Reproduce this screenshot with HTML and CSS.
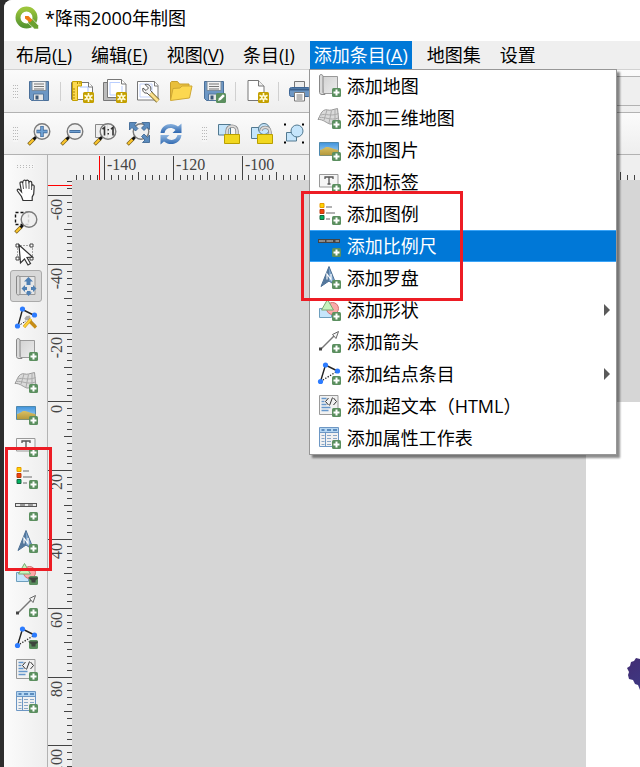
FILE: index.html
```html
<!DOCTYPE html>
<html lang="zh-CN">
<head>
    <meta charset="UTF-8">
    <meta name="viewport" content="width=device-width, initial-scale=1.0">
    <title>*降雨2000年制图</title>
    <link rel="stylesheet" href="styles.css">
</head>
<body>
    <svg class="sprite" aria-hidden="true">
        <defs>
            <linearGradient id="g-sky" x1="0" y1="0" x2="0" y2="1">
                <stop offset="0" stop-color="#3f93dd"/><stop offset="1" stop-color="#b5dcf5"/>
            </linearGradient>
            <linearGradient id="g-sand" x1="0" y1="0" x2="0" y2="1">
                <stop offset="0" stop-color="#d9c063"/><stop offset="1" stop-color="#b3973a"/>
            </linearGradient>
            <linearGradient id="g-paper" x1="0" y1="0" x2="1" y2="1">
                <stop offset="0" stop-color="#d2d2d2"/><stop offset="1" stop-color="#ececec"/>
            </linearGradient>
            <linearGradient id="g-logo" x1="0" y1="0" x2="0" y2="1">
                <stop offset="0" stop-color="#9cc53b"/><stop offset="1" stop-color="#589632"/>
            </linearGradient>
            <linearGradient id="g-sync" x1="0" y1="0" x2="0" y2="1">
                <stop offset="0" stop-color="#8fb6e0"/><stop offset="1" stop-color="#2f68b0"/>
            </linearGradient>
            <linearGradient id="g-rain" x1="0" y1="0" x2="1" y2="1">
                <stop offset="0" stop-color="#432c72"/><stop offset="1" stop-color="#3b3f8c"/>
            </linearGradient>
        </defs>

        <!-- badges -->
        <symbol id="plus" viewBox="0 0 24 24">
            <rect x="15" y="14" width="9" height="9" rx="1.500" fill="#5b8f5f"/>
            <path d="M19.500 15.500v6M16.500 18.500h6" stroke="#fff" stroke-width="2"/>
        </symbol>
        <symbol id="plus-menu" viewBox="0 0 24 24">
            <rect x="15" y="14" width="9" height="9" rx="1.500" fill="#5b8f5f"/>
            <path d="M14 15.500h11l-3.500 3v2h-4v-2z" fill="#3d443d"/>
        </symbol>
        <symbol id="gold" viewBox="0 0 24 24">
            <rect x="13" y="13" width="11" height="11" rx="1.500" fill="#c4a000"/>
            <path d="M18.500 14v9M14.500 16.200l8 4.600M14.500 20.800l8-4.600" stroke="#fffbd8" stroke-width="1.600"/>
            <circle cx="18.500" cy="18.500" r="2.500" fill="#fffbd8"/>
            <circle cx="18.500" cy="18.500" r=".9" fill="#c4a000"/>
        </symbol>
        <symbol id="lens" viewBox="0 0 24 24">
            <path d="M1.500 22.500L7.500 16.500" stroke="#7a6420" stroke-width="3.600"/>
            <path d="M2 22L7 17" stroke="#fcc52c" stroke-width="2.200"/>
            <path d="M6.500 17.500L9.500 14.500" stroke="#111" stroke-width="2.600"/>
            <circle cx="15" cy="9.500" r="7.800" fill="#efefef" fill-opacity=".85" stroke="#7b7b7b" stroke-width="1.400"/>
        </symbol>

        <!-- file toolbar -->
        <symbol id="save" viewBox="0 0 24 24">
            <path d="M2.500 2.500h19v19h-17l-2-2z" fill="#6d97c4" stroke="#4a6f99"/>
            <path d="M5 2.500h14v9H5z" fill="#f2f2f2" stroke="#7d8c9b"/>
            <path d="M7 5h10M7 7.500h10M7 10h10" stroke="#777"/>
            <path d="M6.500 15h10v6.500h-10z" fill="#e6e6e6" stroke="#53769e"/>
            <path d="M8.500 16.500h3v4h-3z" fill="#3d5876"/>
        </symbol>
        <symbol id="new-layout" viewBox="0 0 24 24">
            <path d="M1.500 3.500h17l4 4v13h-21z" fill="#fff" stroke="#777"/>
            <path d="M10 8h8v8" fill="none" stroke="#aac4ff"/>
            <path d="M2.500 2.500h9v4.500h-4v14.500h-5z" fill="#fcd94f" stroke="#c4a000"/>
            <path d="M3 10h2M3 13h2M3 16h2M3 19h2M7.500 3v2M10 3v2" stroke="#a98600"/>
            <path d="M18.500 3v5h4" fill="#fff" stroke="#777"/>
            <use href="#gold"/>
        </symbol>
        <symbol id="duplicate" viewBox="0 0 24 24">
            <path d="M.5 3.500h18v18h-18z" fill="#bcbcbc" stroke="#777"/>
            <path d="M4.500 .5h14l4.500 4.500v13.500H4.500z" fill="#fff" stroke="#777"/>
            <path d="M7 3.500h10M7 3v13h12V7" fill="none" stroke="#b9ceff"/>
            <path d="M18.500 .5V5H23" fill="#fff" stroke="#777"/>
            <use href="#gold"/>
        </symbol>
        <symbol id="manager" viewBox="0 0 24 24">
            <path d="M1.500 2.500h17l3.500 4v14.500H1.500z" fill="#fff" stroke="#777"/>
            <path d="M4 5h12v13H4z" fill="none" stroke="#c3d3fb"/>
            <path d="M18.500 2.500V7H22" fill="#fff" stroke="#777"/>
            <path d="M9 5.500c4-1 7 2.500 5.500 6l2 2-3 3-2.500-2.500c-3 .7-5-2-4-5l3 2.500 2.500-2.500z" fill="#f4f4f4" stroke="#555"/>
            <path d="M14.500 14.500l7.500 7.500" stroke="#8b7a3a" stroke-width="4.600"/>
            <path d="M14.500 14.500l7.500 7.500" stroke="#fbe08a" stroke-width="2.800"/>
        </symbol>
        <symbol id="open" viewBox="0 0 24 24">
            <path d="M1.500 21V3.500l1-1h6l2 2.500h9.500v4" fill="#e9bf3c" stroke="#c79f2e"/>
            <path d="M1.500 21.500L4 9.500l7-.5 2-2h10L20.500 19z" fill="#fcd850" stroke="#cfa835"/>
        </symbol>
        <symbol id="save-as" viewBox="0 0 24 24">
            <use href="#save"/>
            <rect x="14" y="14" width="10" height="10" rx="1.500" fill="#5b8f5f"/>
            <path d="M16 22l1-2.800 4-4 1.800 1.800-4 4z" fill="#fff"/>
        </symbol>
        <symbol id="add-page" viewBox="0 0 24 24">
            <path d="M3 1.500h10.500l5.500 5.500v14.500H3z" fill="#fff" stroke="#777"/>
            <path d="M13.500 1.500V7H19" fill="#eee" stroke="#777"/>
            <use href="#gold"/>
        </symbol>
        <symbol id="print" viewBox="0 0 24 24">
            <path d="M6.500 2.500h10v7h-10z" fill="#ededed" stroke="#777"/>
            <rect x="1.500" y="8.500" width="21" height="9" rx="2" fill="#6d97c4" stroke="#3f6796"/>
            <path d="M2 10.500h20" stroke="#3b5f8b" stroke-width="2"/>
            <path d="M6.500 13.500h10v8.500h-10z" fill="#fff" stroke="#777"/>
            <path d="M8.500 16h6M8.500 18h6M8.500 20h6" stroke="#777"/>
        </symbol>

        <!-- view toolbar -->
        <symbol id="zoom-in" viewBox="0 0 24 24">
            <use href="#lens"/>
            <path d="M15 4v11M9.500 9.500h11" stroke="#38608f" stroke-width="3.400"/>
            <path d="M15 4.500v10M10 9.500h10" stroke="#6d9fd2" stroke-width="2"/>
        </symbol>
        <symbol id="zoom-out" viewBox="0 0 24 24">
            <use href="#lens"/>
            <path d="M9.500 9.500h11" stroke="#38608f" stroke-width="3"/>
            <path d="M10 9.500h10" stroke="#6d9fd2" stroke-width="1.600"/>
        </symbol>
        <symbol id="zoom-actual" viewBox="0 0 24 24">
            <path d="M2.500 2.500h12v13h-12z" fill="#eee" stroke="#888"/>
            <use href="#lens"/>
            <path d="M9.500 7.200l2-1.700v8M18 7.200l2-1.700v8" fill="none" stroke="#333" stroke-width="1.600"/>
            <path d="M14.500 7h1.500v1.500h-1.500zM14.500 11h1.500v1.500h-1.500z" fill="#333"/>
        </symbol>
        <symbol id="zoom-full" viewBox="0 0 24 24">
            <use href="#lens"/>
            <g fill="#5b8bbd" stroke="#355f8e" stroke-width=".8">
                <path d="M3.500 .5h7L8.500 3 12 6.500 9.500 9 6 5.500 3.500 8z"/>
                <path d="M23.500 .5v7L21 5.500 18 8.500 15.500 6l3-3-2.500-2.500z"/>
                <path d="M23.500 20.500h-7l2.500-2.500-3.500-3.500L18 12l3.500 3.500 2-2.500z"/>
            </g>
        </symbol>
        <symbol id="refresh" viewBox="0 0 24 24">
            <path d="M1.500 11C2.500 2 13-.5 19 4.500L22.500 1.500V11h-9l3-3C12 4.500 6.500 6 5.500 11z" fill="url(#g-sync)"/>
            <path d="M22.500 13c-1 9-11.500 11.500-17.500 6.500L1.500 22.500V13h9l-3 3c4.500 3.500 10 2 11-3z" fill="url(#g-sync)"/>
        </symbol>
        <symbol id="lock" viewBox="0 0 24 24">
            <path d="M1.500 2.500h12v10.500h-12z" fill="#c5e5fb" stroke="#527990"/>
            <path d="M10 14V9c0-6.500 10-6.500 10 0v5" fill="none" stroke="#888" stroke-width="3.400"/>
            <path d="M10 14V9c0-6.500 10-6.500 10 0v5" fill="none" stroke="#dcdcdc" stroke-width="1.800"/>
            <path d="M7.500 12.500h15v9h-15z" fill="#f1d71f" stroke="#b99f00"/>
        </symbol>
        <symbol id="unlock" viewBox="0 0 24 24">
            <path d="M1.500 5.500h10v11h-10z" fill="#c5e5fb" stroke="#527990"/>
            <circle cx="14" cy="7" r="5.500" fill="#c5e5fb" stroke="#527990"/>
            <path d="M11 9c0-5 9-5 9 1v4" fill="none" stroke="#888" stroke-width="3.400"/>
            <path d="M11 9c0-5 9-5 9 1v4" fill="none" stroke="#dcdcdc" stroke-width="1.800"/>
            <path d="M7.500 12.500h15v9h-15z" fill="#f1d71f" stroke="#b99f00"/>
        </symbol>
        <symbol id="group" viewBox="0 0 24 24">
            <path d="M3.500 10.500h10v8.500h-10z" fill="#c5e5fb" stroke="#527990"/>
            <circle cx="14" cy="9" r="6" fill="#c5e5fb" stroke="#527990"/>
            <path d="M1 1.500h2v2H1zM19 1.500h2v2h-2zM1 19.500h2v2H1zM19 19.500h2v2h-2z" fill="#000"/>
        </symbol>

        <!-- tools -->
        <symbol id="pan" viewBox="0 0 24 24">
            <path d="M9 22.500l-1.500-4L3.500 13c-1-2 1-2.500 2.500-.8l1.500 1.600L6 5.500c-.3-2 2.200-2.300 2.700-.5C8.500 2 11.500 1 11.800 3.500 12 1.500 14.800 1.500 15 4c.8-1.300 2.800-.8 2.800 1v2.500c.8-1 2.400-.6 2.400 1L19.700 16l-1.500 3v3.500z" fill="#fff" stroke="#333" stroke-width="1.200"/>
            <path d="M8.700 5l.8 6M11.800 3.500l.4 7M15 4v7M17.800 7l-.3 5" stroke="#555"/>
        </symbol>
        <symbol id="zoom-tool" viewBox="0 0 24 24">
            <path d="M1.500 2.500h13v12h-13z" fill="none" stroke="#111" stroke-width="1.400" stroke-dasharray="3 2"/>
            <use href="#lens"/>
        </symbol>
        <symbol id="select" viewBox="0 0 24 24">
            <path d="M3.500 3.500h15v14h-15z" fill="none" stroke="#555" stroke-dasharray="1 2"/>
            <path d="M2 2h3v3H2zM16 2h3v3h-3zM2 15h3v3H2zM16 15h3v3h-3z" fill="#fff" stroke="#444"/>
            <path d="M5 3l13.500 12-5.500.5 3.500 6-2.500 1.500-3.500-6-4 4z" fill="#fff" stroke="#333" stroke-width="1.200"/>
        </symbol>
        <symbol id="move-content" viewBox="0 0 24 24">
            <path d="M3.500 2.500h17.500v18H5z" fill="#e6e6e6" stroke="#999"/>
            <path d="M2.500 2.500c3-1.500 3.500 0 3.500 2v15c0 2-3 2-3.500 0z" fill="#d9d9d9" stroke="#888"/>
            <g fill="#4e7fb3">
                <path d="M14.500 3l4.500 4.500h-2.500V11h-4V7.500H10z"/>
                <path d="M7.500 14.500l3.500-3.500v2h2v3h-2v2zM22.500 14.500L19 11v2h-2v3h2v2z"/>
                <path d="M14.500 22l-3-3.500h1.500V17h3.500v1.500H18z"/>
            </g>
        </symbol>
        <symbol id="edit-nodes" viewBox="0 0 24 24">
            <path d="M4 20L8.500 3.500l12 6" fill="none" stroke="#222" stroke-width="1.400"/>
            <path d="M4 20l8-5" stroke="#222" stroke-dasharray="1.500 1.500"/>
            <path d="M11 13.500l5-3M12 10.500l9 9.500" stroke="#aaa" stroke-width="2.800"/>
            <path d="M16 15.500l6 6M17 13l-7 8" stroke="#c78d16" stroke-width="3.200"/>
            <path d="M17 13l-7 8" stroke="#fcd13a" stroke-width="2"/>
            <circle cx="8.500" cy="3" r="2.600" fill="#2d7cff"/><circle cx="20.500" cy="9" r="2.600" fill="#2d7cff"/><circle cx="3.500" cy="20" r="2.600" fill="#2d7cff"/>
        </symbol>

        <!-- layout items -->
        <symbol id="map" viewBox="0 0 24 24">
            <path d="M5 2.500h15.500v17H6z" fill="url(#g-paper)" stroke="#999"/>
            <path d="M2.500 2c0-2 3.500-2 3.500.5v16l2 2H5c-1.500 0-2.500-1-2.500-2z" fill="#dadada" stroke="#888"/>
            <use href="#plus"/>
        </symbol>
        <symbol id="map3d" viewBox="0 0 24 24">
            <path d="M1 13.500C3 10 4 6 6.500 4.500c3-2 5 .5 8-.5l6-1.500L22 16.500c-4-1.500-6 2-9 1.500S6 13 1 13.500z" fill="#dadada" stroke="#999"/>
            <path d="M4 9c5-2 9 2 17.500-1.500M2.500 11.500c6-1 10 3.500 19 .5M10 4L7 14M14.500 4.500L12 17M18 3.500v12" fill="none" stroke="#aaa"/>
            <use href="#plus"/>
        </symbol>
        <symbol id="picture" viewBox="0 0 24 24">
            <path d="M2.500 4.500h19v13h-19z" fill="url(#g-sky)" stroke="#4d88ae"/>
            <path d="M3 12c4-1 5-3.500 8-3 4 .5 7 3 10.500 3v5.500H3z" fill="url(#g-sand)"/>
            <use href="#plus"/>
        </symbol>
        <symbol id="label" viewBox="0 0 24 24">
            <path d="M2.500 4.500h18.500v12.500H2.500z" fill="#f6f6f6" stroke="#999"/>
            <path d="M8 9V7h8v2M12 7v7M10.500 14h3" fill="none" stroke="#555" stroke-width="1.300"/>
            <use href="#plus"/>
        </symbol>
        <symbol id="legend" viewBox="0 0 24 24">
            <path d="M3 1.500h4v4H3z" fill="#fcd500" stroke="#e89b00"/>
            <path d="M3 7.500h4v4H3z" fill="#f4420d" stroke="#b93a10"/>
            <path d="M3 13.500h4v4H3z" fill="#00b362" stroke="#17643c"/>
            <path d="M9 5h6M9 11h9M9 17h4" stroke="#999" stroke-width="1.500"/>
            <use href="#plus"/>
        </symbol>
        <symbol id="scalebar" viewBox="0 0 24 24">
            <path d="M1 5h22v4H1z" fill="#555"/>
            <path d="M2 6h4.500v2H2zM11 6h3.500v2H11zM18.500 6H22v2h-3.500z" fill="#e8e8e8"/>
            <path d="M6.500 6H11v2H6.500zM14.500 6h4v2h-4z" fill="#999"/>
            <use href="#plus"/>
        </symbol>
        <symbol id="scalebar-dark" viewBox="0 0 24 24">
            <path d="M1 5h22v4H1z" fill="#444"/>
            <path d="M2 6h4.500v2H2zM11 6h3.500v2H11zM18.500 6H22v2h-3.500z" fill="#8d8d8d"/>
            <path d="M6.500 6.500H8v1H6.500zM9.500 6.500H11v1H9.500zM14.500 6.500H16v1h-1.500z" fill="#d5d5d5"/>
            <use href="#plus"/>
        </symbol>
        <symbol id="north" viewBox="0 0 24 24">
            <path d="M12 .5l8 20-8-5.500L4 20.500z" fill="#7fa6cd" stroke="#4b6d91"/>
            <path d="M12 1v14l-7.500 5z" fill="#54779c"/>
            <path d="M10 13.500V8l4 5.500V8" fill="none" stroke="#fff" stroke-width="1.200"/>
            <use href="#plus"/>
        </symbol>
        <symbol id="shape-base" viewBox="0 0 24 24">
            <path d="M2.500 10.500h12v9h-12z" fill="#c5e5fb" stroke="#6d9ebd"/>
            <circle cx="15.500" cy="10.500" r="6" fill="#fba9a9" stroke="#d07070"/>
            <path d="M10.500 1.500l6 10.500h-12z" fill="#c7f3bd" stroke="#7aa873"/>
        </symbol>
        <symbol id="shape" viewBox="0 0 24 24"><use href="#shape-base"/><use href="#plus"/></symbol>
        <symbol id="shape-menu" viewBox="0 0 24 24"><use href="#shape-base"/><use href="#plus-menu"/></symbol>
        <symbol id="arrow" viewBox="0 0 24 24">
            <path d="M4 19L18 5" stroke="#777" stroke-width="1.400"/>
            <path d="M21.500 1.500l-6 3 3.500 4z" fill="#f4f4f4" stroke="#666"/>
            <path d="M2 17.500h3v3H2z" fill="#444"/>
            <use href="#plus"/>
        </symbol>
        <symbol id="node-base" viewBox="0 0 24 24">
            <path d="M3.500 19.500L8.500 3l12 6" fill="none" stroke="#222" stroke-width="1.400"/>
            <path d="M3.500 19.500L20.500 9" stroke="#222" stroke-width="1.300" stroke-dasharray="1.300 1.500"/>
            <circle cx="8.500" cy="3" r="2.600" fill="#2d7cff"/><circle cx="20.500" cy="9" r="2.600" fill="#2d7cff"/><circle cx="3.500" cy="19.500" r="2.600" fill="#2d7cff"/>
        </symbol>
        <symbol id="node" viewBox="0 0 24 24"><use href="#node-base"/><use href="#plus"/></symbol>
        <symbol id="node-menu" viewBox="0 0 24 24"><use href="#node-base"/><use href="#plus-menu"/></symbol>
        <symbol id="html" viewBox="0 0 24 24">
            <path d="M2.500 1.500h18.500v19H2.500z" fill="#f1f1f1" stroke="#999"/>
            <path d="M4.500 4.500h5M4.500 7.500h3M4.500 10.500h5M4.500 13.500h9M4.500 16.500h7" stroke="#6597cc" stroke-width="1.500"/>
            <path d="M11.500 4L8.500 7.500l3 3.500M16.500 4l3 3.500-3 3.500M15.500 3.500l-3 8" fill="none" stroke="#333"/>
            <use href="#plus"/>
        </symbol>
        <symbol id="table" viewBox="0 0 24 24">
            <path d="M2.500 1.500h19v19h-19z" fill="#f1f1f1" stroke="#6d97c4"/>
            <path d="M3 2h18v4.500H3z" fill="#b4d6f2"/>
            <path d="M2.500 6.500h19M8.500 6.500v14" stroke="#6d97c4"/>
            <path d="M4.500 4h3M10 4h4M16 4h4" stroke="#3f74ad" stroke-width="1.400"/>
            <path d="M4.500 9.500h3M4.500 12.500h3M4.500 15.500h3M4.500 18.500h3M10 9.500h4M10 12.500h4M10 15.500h4M10 18.500h4M16 9.500h4M16 12.500h4" stroke="#8aa7c6" stroke-width="1.200"/>
            <use href="#plus"/>
        </symbol>
    </svg>

    <div class="window">
        <header class="title-bar">
            <svg class="logo" viewBox="0 0 24 24" aria-hidden="true">
                <circle cx="11.500" cy="11.500" r="8.500" fill="none" stroke="url(#g-logo)" stroke-width="5"/>
                <path d="M13 13h4.500l6 6.500V23h-4L13 17z" fill="#6ba030" stroke="#fff" stroke-width=".6"/>
                <path d="M10 10h3.500l4 4-2.500 2.500-5-4z" fill="#ee7913"/>
            </svg>
            <h1>*降雨2000年制图</h1>
        </header>

        <nav class="menu-bar">
            <div class="menu"><button>布局(<u>L</u>)</button></div>
            <div class="menu"><button>编辑(<u>E</u>)</button></div>
            <div class="menu"><button>视图(<u>V</u>)</button></div>
            <div class="menu"><button>条目(<u>I</u>)</button></div>
            <div class="menu open">
                <button>添加条目(<u>A</u>)</button>
                <div class="dropdown">
                    <button><svg><use href="#map"/></svg>添加地图</button>
                    <button><svg><use href="#map3d"/></svg>添加三维地图</button>
                    <button><svg><use href="#picture"/></svg>添加图片</button>
                    <button><svg><use href="#label"/></svg>添加标签</button>
                    <button><svg><use href="#legend"/></svg>添加图例</button>
                    <button class="current"><svg><use href="#scalebar-dark"/></svg>添加比例尺</button>
                    <button><svg><use href="#north"/></svg>添加罗盘</button>
                    <button class="has-sub"><svg><use href="#shape"/></svg>添加形状</button>
                    <button><svg><use href="#arrow"/></svg>添加箭头</button>
                    <button class="has-sub"><svg><use href="#node"/></svg>添加结点条目</button>
                    <button><svg><use href="#html"/></svg>添加超文本（HTML）</button>
                    <button><svg><use href="#table"/></svg>添加属性工作表</button>
                </div>
            </div>
            <div class="menu"><button>地图集</button></div>
            <div class="menu"><button>设置</button></div>
        </nav>

        <div class="toolbar">
            <span class="grip"></span>
            <button aria-label="保存"><svg><use href="#save"/></svg></button>
            <span class="separator"></span>
            <button aria-label="新建布局"><svg><use href="#new-layout"/></svg></button>
            <button aria-label="复制布局"><svg><use href="#duplicate"/></svg></button>
            <button aria-label="布局管理器"><svg><use href="#manager"/></svg></button>
            <button aria-label="打开"><svg><use href="#open"/></svg></button>
            <button aria-label="另存为"><svg><use href="#save-as"/></svg></button>
            <span class="separator"></span>
            <button aria-label="添加页面"><svg><use href="#add-page"/></svg></button>
            <span class="separator"></span>
            <button aria-label="打印"><svg><use href="#print"/></svg></button>
            <span class="panel-edge"></span>
        </div>

        <div class="toolbar">
            <span class="grip"></span>
            <button aria-label="放大"><svg><use href="#zoom-in"/></svg></button>
            <button aria-label="缩小"><svg><use href="#zoom-out"/></svg></button>
            <button aria-label="实际大小"><svg><use href="#zoom-actual"/></svg></button>
            <button aria-label="全图"><svg><use href="#zoom-full"/></svg></button>
            <button aria-label="刷新"><svg><use href="#refresh"/></svg></button>
            <span class="grip inner"></span>
            <button aria-label="锁定"><svg><use href="#lock"/></svg></button>
            <button aria-label="解锁"><svg><use href="#unlock"/></svg></button>
            <button aria-label="组合"><svg><use href="#group"/></svg></button>
        </div>

        <main class="workspace">
            <aside class="toolbox">
                <span class="grip wide"></span>
                <button aria-label="平移"><svg><use href="#pan"/></svg></button>
                <button aria-label="缩放"><svg><use href="#zoom-tool"/></svg></button>
                <button aria-label="选择"><svg><use href="#select"/></svg></button>
                <button aria-label="移动内容" class="active"><svg><use href="#move-content"/></svg></button>
                <button aria-label="编辑结点"><svg><use href="#edit-nodes"/></svg></button>
                <button aria-label="添加地图"><svg><use href="#map"/></svg></button>
                <button aria-label="添加三维地图"><svg><use href="#map3d"/></svg></button>
                <button aria-label="添加图片"><svg><use href="#picture"/></svg></button>
                <button aria-label="添加标签"><svg><use href="#label"/></svg></button>
                <button aria-label="添加图例"><svg><use href="#legend"/></svg></button>
                <button aria-label="添加比例尺"><svg><use href="#scalebar"/></svg></button>
                <button aria-label="添加罗盘"><svg><use href="#north"/></svg></button>
                <button aria-label="添加形状"><svg><use href="#shape-menu"/></svg></button>
                <button aria-label="添加箭头"><svg><use href="#arrow"/></svg></button>
                <button aria-label="添加结点条目"><svg><use href="#node-menu"/></svg></button>
                <button aria-label="添加超文本"><svg><use href="#html"/></svg></button>
                <button aria-label="添加属性工作表"><svg><use href="#table"/></svg></button>
            </aside>
            <div class="view">
                <svg class="ruler ruler-x" id="ruler-x"></svg>
                <svg class="ruler ruler-y" id="ruler-y"></svg>
                <div class="canvas">
                    <div class="page">
                        <svg class="map-edge" viewBox="0 0 40 34" aria-hidden="true">
                            <path d="M1 12l3-2 1-4 3-1 2-3 4 1V0h26v34H14l-2-5-3-1-2-4-4-1-1-4 1-3z" fill="url(#g-rain)"/>
                        </svg>
                    </div>
                </div>
            </div>
        </main>

        <div class="mark mark-menu"></div>
        <div class="mark mark-tools"></div>
    </div>

    <script src="rulers.js"></script>
</body>
</html>
```
FILE: styles.css
```css
* {
    box-sizing: border-box;
}
body {
    margin: 0;
    padding-left: 4px;
    background-color: #2e2e2e;
    color: #000;
    font-family: "Open Sans", "Noto Sans CJK SC", sans-serif;
    font-size: 18px;
    line-height: 28px;
    overflow: hidden;
}
button {
    margin: 0;
    padding: 0;
    border: 0;
    background: none;
    color: inherit;
    font: inherit;
}
svg {
    display: block;
    flex: none;
}
.sprite {
    position: absolute;
    width: 0;
    height: 0;
}
.window {
    position: relative;
    display: flex;
    flex-direction: column;
    height: 100vh;
    border-top-left-radius: 8px;
    background-color: #efefef;
    overflow: hidden;
}

/* title and menus */
.title-bar {
    display: flex;
    align-items: center;
    gap: 6px;
    height: 41px;
    padding: 0 11px 5px;
    background-color: #fff;
}
.title-bar h1 {
    margin: 0;
    font-size: 18px;
    font-weight: 400;
}
.logo {
    width: 24px;
    height: 24px;
}
.menu-bar {
    display: flex;
    gap: 11px;
    height: 29px;
    padding-left: 8px;
    border-bottom: 1px solid #d2d2d2;
}
.menu {
    position: relative;
}
.menu > button {
    height: 28px;
    padding: 0 4px;
    white-space: nowrap;
}
.menu u {
    text-underline-offset: 2px;
}
.menu.open > button {
    background-color: #0078d7;
    color: #fff;
}
.dropdown {
    position: absolute;
    top: 28px;
    left: -1px;
    z-index: 2;
    width: 308px;
    border: 1px solid #979797;
    background-color: #fff;
    box-shadow: 3px 3px 2px rgba(0, 0, 0, 0.45);
}
.dropdown button {
    display: flex;
    align-items: center;
    gap: 6px;
    width: 100%;
    height: 32px;
    padding: 0 6px 0 7px;
    border: solid transparent;
    border-width: 1px 0;
}
.dropdown svg,
.toolbar svg,
.toolbox svg {
    width: 24px;
    height: 24px;
}
.dropdown .current {
    border-color: #3ba4f7;
    background-color: #0078d7;
    color: #fff;
}
.has-sub::after {
    content: "";
    margin-left: auto;
    border: 6px solid transparent;
    border-left-color: #5a5a5a;
    border-right-width: 0;
}

/* toolbars */
.toolbar {
    display: flex;
    align-items: center;
    gap: 9px;
    height: 43px;
    padding-left: 9px;
    border-bottom: 1px solid #b2b2b2;
    background: linear-gradient(#fbfbfb, #eee);
}
.toolbar + .toolbar {
    height: 42px;
}
.grip {
    width: 5px;
    height: 17px;
    background: repeating-linear-gradient(#f6f6f6 0 2px, transparent 2px 3px), repeating-linear-gradient(90deg, #b9b9b9 0 1px, #f6f6f6 1px 2px);
}
.grip.inner {
    margin: 0 1px 0 10px;
}
.grip.wide {
    width: 17px;
    height: 5px;
    margin: 9px 0 5px;
    background: repeating-linear-gradient(#f6f6f6 0 1px, transparent 1px 2px), repeating-linear-gradient(90deg, #b9b9b9 0 1px, #f6f6f6 1px 3px);
}
.separator {
    width: 1px;
    height: 19px;
    background-color: #d0d0d0;
}
.panel-edge {
    width: 60px;
    height: 30px;
    margin-left: auto;
    border: solid #b2b2b2;
    border-width: 1px 0;
    background-color: #efefef;
}

/* drawing area */
.workspace {
    display: flex;
    flex: 1;
    min-height: 0;
}
.toolbox {
    display: flex;
    flex-direction: column;
    align-items: center;
    width: 44px;
    border-right: 1px solid #b2b2b2;
    background: linear-gradient(90deg, #fbfbfb, #eee);
}
.toolbox button {
    display: flex;
    flex: none;
    align-items: center;
    justify-content: center;
    width: 32px;
    height: 32px;
}
.toolbox .active {
    border: 1px solid #aaa;
    border-radius: 3px;
    background-color: #d8d8d8;
}
.view {
    display: grid;
    flex: 1;
    grid-template: 25px 1fr / 24px 1fr;
    min-width: 0;
}
.ruler {
    width: 100%;
    height: 100%;
    fill: #444;
    stroke: none;
    font-family: "Liberation Serif", serif;
    font-size: 16px;
    shape-rendering: crispEdges;
}
.ruler .cursor {
    fill: #f00;
}
.ruler-x {
    grid-column: 1 / 3;
}
.canvas {
    position: relative;
    background-color: #d6d6d6;
    overflow: hidden;
}
.page {
    position: absolute;
    top: 222px;
    left: 514px;
    width: 1100px;
    height: 800px;
    background-color: #fff;
}
.map-edge {
    position: absolute;
    top: 254px;
    left: 40px;
    width: 40px;
    height: 34px;
}

/* red highlight frames */
.mark {
    position: absolute;
    z-index: 3;
    border: 3px solid #ed1c24;
    pointer-events: none;
}
.mark-menu {
    top: 191px;
    left: 297px;
    width: 162px;
    height: 110px;
}
.mark-tools {
    top: 447px;
    left: 1px;
    width: 47px;
    height: 124px;
}
```
FILE: rulers.js
```javascript
// rulers along the top and left of the canvas
const STEP = 6.88;
const NS = 'http://www.w3.org/2000/svg';

function addRect(svg, x, y, width, height, cls) {
    const rect = document.createElementNS(NS, 'rect');
    rect.setAttribute('x', x);
    rect.setAttribute('y', y);
    rect.setAttribute('width', width);
    rect.setAttribute('height', height);
    if (cls) rect.setAttribute('class', cls);
    svg.appendChild(rect);
}

function addLabel(svg, text, x, y, vertical) {
    const label = document.createElementNS(NS, 'text');
    label.textContent = text;
    label.setAttribute('x', x);
    label.setAttribute('y', y);
    if (vertical) {
        label.setAttribute('text-anchor', 'end');
        label.setAttribute('transform', 'rotate(-90 ' + x + ' ' + y + ')');
    }
    svg.appendChild(label);
}

// tick 0 is the first major tick
function drawX(svg, origin, firstValue) {
    for (let i = -4; i < 80; i++) {
        const x = Math.round(origin + i * STEP);
        if (i % 10 === 0) {
            addRect(svg, x, 1, 1, 24);
            if (i <= 20) addLabel(svg, firstValue + i * 2, x + 3, 15, false);
        } else {
            const size = i % 5 === 0 ? 8 : 5;
            addRect(svg, x, 25 - size, 1, size);
        }
    }
}

function drawY(svg, origin, firstValue) {
    for (let i = -2; i < 90; i++) {
        const y = Math.round(origin + i * STEP);
        if (i % 10 === 0) {
            addRect(svg, 0, y, 24, 1);
            addLabel(svg, firstValue + i * 2, 14, y + 4, true);
        } else {
            const size = i % 5 === 0 ? 8 : 5;
            addRect(svg, 24 - size, y, size, 1);
        }
    }
}

const rulerX = document.getElementById('ruler-x');
const rulerY = document.getElementById('ruler-y');
drawX(rulerX, 56, -140);
drawY(rulerY, 15, -60);
addRect(rulerX, 51, 1, 1, 24, 'cursor');
addRect(rulerY, 0, 5, 24, 1, 'cursor');
```
